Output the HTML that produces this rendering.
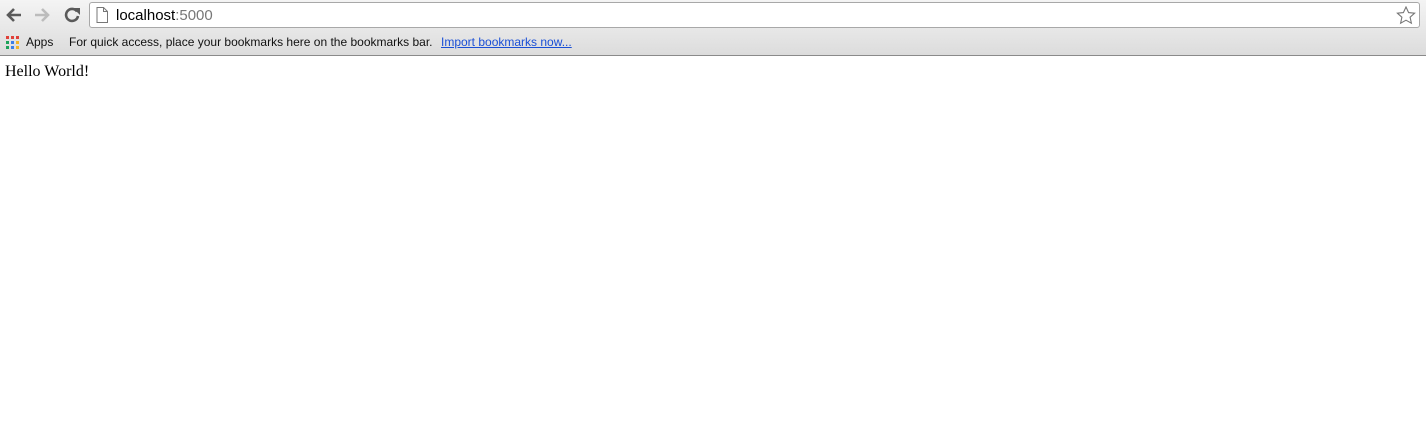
<!DOCTYPE html>
<html><head><style>
*{margin:0;padding:0;box-sizing:border-box}
html,body{width:1426px;height:445px;overflow:hidden;background:#fff}
#chrome{position:absolute;left:0;top:0;width:1426px;height:56px;background:linear-gradient(#f4f4f4,#dcdcdc);border-bottom:1px solid #8a8a8a}
#omni{position:absolute;left:89px;top:2px;width:1331px;height:26px;background:#fff;border:1px solid #a8a8a8;border-radius:3px}
.t{position:absolute;font-family:"Liberation Sans",sans-serif;white-space:nowrap}
</style></head><body>
<div id="chrome">
<svg style="position:absolute;left:5px;top:6px" width="80" height="18" viewBox="0 0 80 18">
<path d="M16 9H3M9 3L3 9l6 6" stroke="#5a5a5a" stroke-width="2.6" fill="none"/>
<path d="M30 9h13M37 3l6 6-6 6" stroke="#bcbcbc" stroke-width="2.6" fill="none"/>
<path d="M72 5.5A6 6 0 1 0 73 10" stroke="#5a5a5a" stroke-width="2.6" fill="none"/>
<path d="M68 2h7v7z" fill="#5a5a5a"/>
</svg>
<div id="omni">
<svg style="position:absolute;left:6px;top:4px" width="12" height="16" viewBox="0 0 12 16"><path d="M1 .5h6.5l4 4v11H1z M7.5 .5v4h4" fill="#fff" stroke="#777"/></svg>
<div class="t" style="left:26px;top:4px;font-size:15px;color:#000">localhost<span style="color:#777">:5000</span></div>
<svg style="position:absolute;right:3px;top:3px" width="20" height="19" viewBox="0 0 20 19"><path d="M10 1l2.6 5.6 6 .6-4.5 4 1.3 6L10 14.2 4.6 17.2l1.3-6-4.5-4 6-.6z" fill="none" stroke="#777" stroke-width="1.1"/></svg>
</div>
<svg style="position:absolute;left:6px;top:36px" width="13" height="13" viewBox="0 0 13 13">
<rect x="0" y="0" width="3" height="3" fill="#e0413a"/><rect x="5" y="0" width="3" height="3" fill="#e0413a"/><rect x="10" y="0" width="3" height="3" fill="#e0413a"/>
<rect x="0" y="5" width="3" height="3" fill="#1da25a"/><rect x="5" y="5" width="3" height="3" fill="#3b7ee8"/><rect x="10" y="5" width="3" height="3" fill="#f2b328"/>
<rect x="0" y="10" width="3" height="3" fill="#1da25a"/><rect x="5" y="10" width="3" height="3" fill="#3b7ee8"/><rect x="10" y="10" width="3" height="3" fill="#f2b328"/>
</svg>
<div class="t" style="left:26px;top:35px;font-size:12px;color:#111">Apps</div>
<div class="t" style="left:69px;top:35px;font-size:12px;color:#111">For quick access, place your bookmarks here on the bookmarks bar.</div>
<div class="t" style="left:441px;top:35px;font-size:12px;color:#1a4fd6;text-decoration:underline">Import bookmarks now...</div>
</div>
<div style="position:absolute;left:5px;top:63px;font-family:'Liberation Serif',serif;font-size:16px;color:#000">Hello World!</div>
</body></html>
